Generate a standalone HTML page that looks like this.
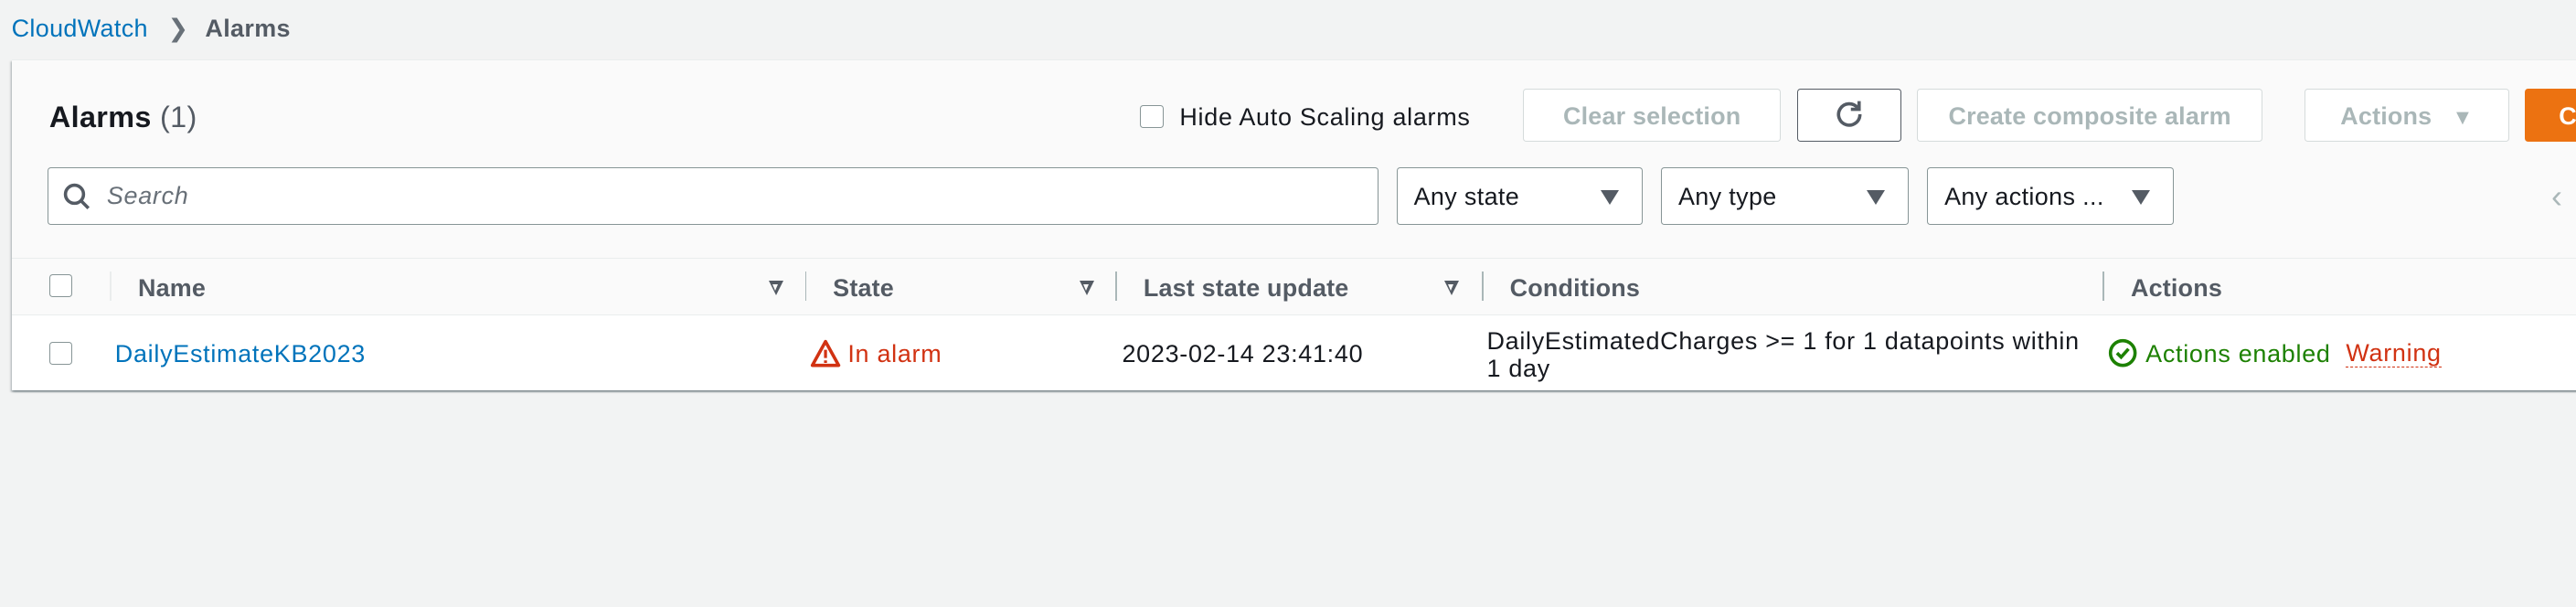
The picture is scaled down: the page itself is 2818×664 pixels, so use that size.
<!DOCTYPE html>
<html><head><meta charset="utf-8">
<style>
html{zoom:1.7972}
body{margin:0;width:1568px;height:369.5px;overflow:hidden;background:#f2f3f3;font-family:"Liberation Sans",sans-serif;font-size:15px;letter-spacing:.4px;color:#16191f;position:relative}
.a{position:absolute;white-space:nowrap}
.bc{top:9px;left:7px;font-size:15px;letter-spacing:.2px}
.bc .l{color:#0073bb}.bc .c{color:#545b64;font-weight:bold}
.panel{position:absolute;left:7px;top:36px;width:1600px;height:201px;background:#fafafa;border-top:1px solid #eaeded;box-shadow:0 1px 1px rgba(0,28,36,.3),1px 1px 1px rgba(0,28,36,.15),-1px 1px 1px rgba(0,28,36,.15)}
.btn{position:absolute;top:54px;height:31px;border:1px solid #d5dbdb;border-radius:2px;background:#fff;color:#aab7b8;font-weight:bold;font-size:15px;letter-spacing:.1px;line-height:33px;text-align:center;box-sizing:content-box}
.inp{position:absolute;top:102px;height:35px;border:1px solid #879596;border-radius:2px;background:#fff;box-sizing:border-box}
.sel{position:absolute;top:102px;height:35px;border:1px solid #879596;border-radius:2px;background:#fff;box-sizing:border-box;line-height:35px;padding-left:10px;font-size:15px;letter-spacing:.2px}
.tri{position:absolute;right:14px;top:13px;width:0;height:0;border-left:6px solid transparent;border-right:6px solid transparent;border-top:9px solid #545b64}
.cb{position:absolute;width:13px;height:13px;border:1px solid #879596;border-radius:2px;background:#fff}
.hdr{position:absolute;left:7px;top:157px;width:1600px;height:34px;border-top:1px solid #eaeded;border-bottom:1px solid #eaeded;background:#fafafa}
.row{position:absolute;left:7px;top:192px;width:1600px;height:45px;background:#fff}
.th{position:absolute;top:167px;font-weight:bold;color:#545b64;font-size:15px;letter-spacing:.1px}
.dv{position:absolute;top:165px;width:1px;height:18px;background:#aab7b8}
.fi{position:absolute;top:171px;width:0;height:0;border-left:5px solid transparent;border-right:5px solid transparent;border-top:9px solid #545b64}
.fi:after{content:"";position:absolute;left:-2px;top:-7px;border-left:2px solid transparent;border-right:2px solid transparent;border-top:4px solid #fafafa}
</style></head><body>
<div class="a bc"><span class="l">CloudWatch</span><span style="color:#687078;margin:0 10px 0 12px;font-size:15px">&#x276F;</span><span class="c">Alarms</span></div>
<div class="panel"></div>
<div class="a" style="left:30px;top:61px;font-size:18px;font-weight:bold;letter-spacing:.2px">Alarms <span style="font-weight:normal;color:#545b64">(1)</span></div>
<div class="cb" style="left:694px;top:64px"></div>
<div class="a" style="left:718px;top:63px">Hide Auto Scaling alarms</div>
<div class="btn" style="left:927px;width:156px">Clear selection</div>
<div class="btn" style="left:1094px;width:62px;border-color:#545b64">
<svg width="20" height="20" viewBox="0 0 20 20" style="margin-top:5px"><path d="M15 6A6.5 6.5 0 1 0 16.5 10" fill="none" stroke="#545b64" stroke-width="2"/><path d="M16 2v5h-5" fill="none" stroke="#545b64" stroke-width="2"/></svg></div>
<div class="btn" style="left:1167px;width:209px">Create composite alarm</div>
<div class="btn" style="left:1403px;width:123px">Actions <span style="font-size:13px;margin-left:8px">&#9660;</span></div>
<div class="btn" style="left:1537px;width:60px;background:#ec7211;border-color:#ec7211;color:#fff;text-align:left;padding-left:20px">C</div>
<div class="inp" style="left:29px;width:810px"></div>
<svg class="a" style="left:38px;top:111px" width="18" height="18" viewBox="0 0 18 18"><circle cx="7.5" cy="7.5" r="5.5" fill="none" stroke="#545b64" stroke-width="2"/><path d="M11.5 11.5l4.5 4.5" stroke="#545b64" stroke-width="2"/></svg>
<div class="a" style="left:65px;top:111px;font-style:italic;color:#687078">Search</div>
<div class="sel" style="left:850px;width:150px">Any state<div class="tri"></div></div>
<div class="sel" style="left:1011px;width:151px">Any type<div class="tri"></div></div>
<div class="sel" style="left:1173px;width:150px">Any actions ...<div class="tri"></div></div>
<div class="a" style="left:1553px;top:108px;color:#aab7b8;font-size:20px">&#x2039;</div>
<div class="hdr"></div>
<div class="row"></div>
<div class="cb" style="left:30px;top:167px"></div>
<div class="dv" style="left:67px;background:#eaeded"></div>
<div class="th" style="left:84px">Name</div>
<div class="fi" style="left:468px"></div><div class="dv" style="left:490px"></div>
<div class="th" style="left:507px">State</div>
<div class="fi" style="left:657px"></div><div class="dv" style="left:679px"></div>
<div class="th" style="left:696px">Last state update</div>
<div class="fi" style="left:879px"></div><div class="dv" style="left:902px"></div>
<div class="th" style="left:919px">Conditions</div>
<div class="dv" style="left:1280px"></div>
<div class="th" style="left:1297px">Actions</div>
<div class="cb" style="left:30px;top:208px"></div>
<div class="a" style="left:70px;top:207px;color:#0073bb">DailyEstimateKB2023</div>
<svg class="a" style="left:493px;top:206px" width="19" height="18" viewBox="0 0 19 18"><path d="M9.5 2L17.5 16.5H1.5Z" fill="none" stroke="#d13212" stroke-width="2" stroke-linejoin="round"/><path d="M9.5 7v5M9.5 13.5v1.5" stroke="#d13212" stroke-width="1.8"/></svg>
<div class="a" style="left:516px;top:207px;color:#d13212">In alarm</div>
<div class="a" style="left:683px;top:207px">2023-02-14 23:41:40</div>
<div class="a" style="left:905px;top:199px;line-height:17px">DailyEstimatedCharges &gt;= 1 for 1 datapoints within<br>1 day</div>
<svg class="a" style="left:1283px;top:206px" width="18" height="18" viewBox="0 0 18 18"><circle cx="9" cy="9" r="7.5" fill="none" stroke="#1d8102" stroke-width="2"/><path d="M5.5 9l2.5 2.5 4.5-5" fill="none" stroke="#1d8102" stroke-width="2"/></svg>
<div class="a" style="left:1306px;top:207px;color:#1d8102">Actions enabled</div>
<div class="a" style="left:1428px;top:207px;color:#d13212;border-bottom:1px dashed #d13212;line-height:16px">Warning</div>
</body></html>
